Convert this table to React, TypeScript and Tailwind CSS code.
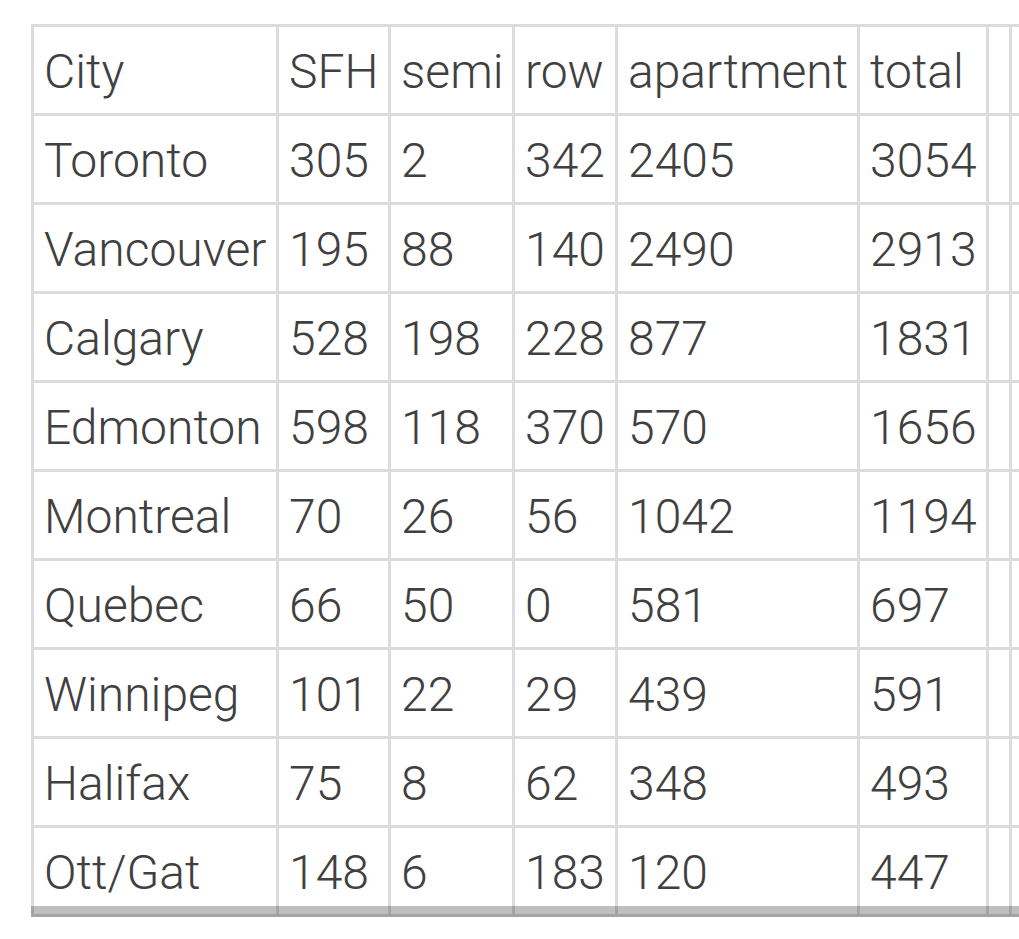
const header = ["City", "SFH", "semi", "row", "apartment", "total", "", ""];

const rows: (string | number)[][] = [
  ["Toronto", 305, 2, 342, 2405, 3054],
  ["Vancouver", 195, 88, 140, 2490, 2913],
  ["Calgary", 528, 198, 228, 877, 1831],
  ["Edmonton", 598, 118, 370, 570, 1656],
  ["Montreal", 70, 26, 56, 1042, 1194],
  ["Quebec", 66, 50, 0, 581, 697],
  ["Winnipeg", 101, 22, 29, 439, 591],
  ["Halifax", 75, 8, 62, 348, 493],
  ["Ott/Gat", 148, 6, 183, 120, 447],
];

function Cell({ children }: { children?: React.ReactNode }) {
  return (
    <div className="bg-white h-[86px] px-[10px] flex items-center whitespace-nowrap pt-[3px]">
      {children}
    </div>
  );
}

export default function App() {
  return (
    <div className="w-[1019px] h-[939px] overflow-hidden bg-white pt-[24px] pl-[31px]">
      <div
        className="relative w-max text-[48px] font-light text-[#404040] leading-none"
        style={{ fontFamily: "Roboto, 'Liberation Sans', sans-serif" }}
      >
        <div className="grid grid-cols-[242px_109px_121px_100px_239px_126px_20px_200px] gap-[3px] p-[3px] bg-[#dcdcdc]">
          {header.map((h, i) => (
            <Cell key={"h" + i}>{h}</Cell>
          ))}
          {rows.map((r) =>
            [...r, "", ""].map((v, i) => <Cell key={r[0] + "-" + i}>{v}</Cell>)
          )}
        </div>
        <div className="absolute left-0 right-0 bottom-0 h-[11px] bg-black/25" />
      </div>
    </div>
  );
}
